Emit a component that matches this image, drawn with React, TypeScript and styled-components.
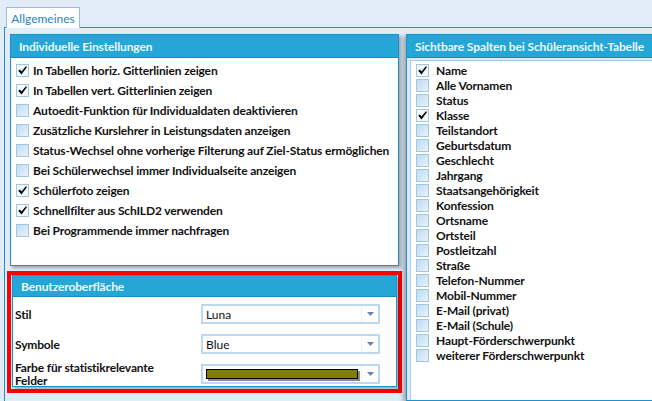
import React from "react";
import styled, { createGlobalStyle } from "styled-components";

const Global = createGlobalStyle`
  html, body { margin: 0; padding: 0; background: #e1ecf8; }
  body { font-family: Lato, "Liberation Sans", sans-serif; }
`;

const Window = styled.div`
  width: 652px;
  height: 401px;
  overflow: hidden;
  background: #e1ecf8;
  display: flex;
  flex-direction: column;
`;

const TabStrip = styled.div`
  height: 27px;
  box-sizing: border-box;
  padding: 7px 0 0 6px;
  display: flex;
  align-items: flex-end;
  position: relative;
  z-index: 1;
`;

const Tab = styled.div`
  height: 21px;
  width: 74px;
  box-sizing: border-box;
  margin-bottom: -1px;
  background: #fff;
  border: 1px solid #8fc0e3;
  border-bottom: none;
  color: #2b7fc4;
  font-size: 12px;
  display: flex;
  align-items: center;
  justify-content: center;
`;

const TabBody = styled.div`
  flex: 1;
  margin-left: 4px;
  border-left: 1px solid #1f90cf;
  border-top: 1px solid #1f90cf;
  padding: 6px 0 0 5px;
  display: flex;
  gap: 7px;
  min-height: 0;
`;

const LeftColumn = styled.div`
  width: 389px;
  flex: none;
  display: flex;
  flex-direction: column;
`;

const RightColumn = styled.div`
  width: 270px;
  flex: none;
  display: flex;
  flex-direction: column;
`;

const Panel = styled.div<{ $height?: number; $shadowLeft?: boolean }>`
  background: #fff;
  border: 1px solid #1b92cc;
  box-shadow: ${(p) =>
    p.$shadowLeft ? "-3px 2px 4px rgba(0, 0, 0, 0.28)" : "2px 2px 3px rgba(0, 0, 0, 0.3)"};
  display: flex;
  flex-direction: column;
  ${(p) => (p.$height ? `height: ${p.$height}px;` : "flex: 1;")}
  box-sizing: border-box;
`;

const PanelHeader = styled.div<{ $h: number }>`
  height: ${(p) => p.$h}px;
  flex: none;
  box-sizing: border-box;
  background: #24a6d6;
  border-bottom: 1px solid #168bc2;
  color: #eef8fd;
  font-size: 12px;
  font-weight: 700;
  letter-spacing: -0.12px;
  display: flex;
  align-items: center;
  padding-left: 8px;
  white-space: nowrap;
`;

const CheckList = styled.div<{ $row: number; $gap: number }>`
  display: flex;
  flex-direction: column;
  padding-top: 2px;
  & > div {
    height: ${(p) => p.$row}px;
    gap: ${(p) => p.$gap}px;
  }
`;

const CheckRow = styled.div`
  display: flex;
  align-items: center;
  padding-left: 5px;
  font-size: 12px;
  font-weight: 700;
  letter-spacing: -0.15px;
  color: #111;
  white-space: nowrap;
`;

const Box = styled.span<{ $checked: boolean }>`
  width: 13px;
  height: 13px;
  flex: none;
  box-sizing: border-box;
  border: 1px solid #a3c6e1;
  background: ${(p) =>
    p.$checked ? "#f3f8fc" : "linear-gradient(135deg, #bfdcf2 0%, #d3e8f7 55%, #e8f3fb 100%)"};
  display: flex;
  align-items: center;
  justify-content: center;
`;

const Check = () => (
  <svg width="11" height="11" viewBox="0 0 11 11">
    <path d="M1.2 5.8 L3 4.6 L4.4 6.6 L9 1.3 L10 2.1 L4.5 9.4 Z" fill="#000" />
  </svg>
);

const Checkbox = ({ label, checked }: { label: string; checked?: boolean }) => (
  <CheckRow>
    <Box $checked={!!checked}>{checked && <Check />}</Box>
    {label}
  </CheckRow>
);

const RedFrame = styled.div`
  margin: 5px -3px 0 -3px;
  height: 122px;
  flex: none;
  box-sizing: border-box;
  border: 4px solid #ff0000;
  padding: 0 1px 2px 1px;
  display: flex;
  flex-direction: column;
`;

const FormBody = styled.div`
  flex: 1;
  display: grid;
  grid-template-columns: 186px 179px;
  grid-auto-rows: 20px;
  row-gap: 10px;
  align-items: center;
  align-content: start;
  padding: 7px 0 0 2px;
`;

const Label = styled.div`
  font-size: 12px;
  font-weight: 700;
  letter-spacing: -0.15px;
  color: #111;
  line-height: 13px;
  width: 160px;
`;

const Combo = styled.div`
  height: 20px;
  box-sizing: border-box;
  border: 2px solid #bdd9ef;
  background: #fff;
  display: flex;
  align-items: stretch;
`;

const ComboValue = styled.div`
  flex: 1;
  display: flex;
  align-items: center;
  padding-left: 3px;
  font-size: 12px;
  color: #111;
  border-right: 1px solid #eef2f6;
`;

const ComboButton = styled.div`
  width: 16px;
  display: flex;
  align-items: center;
  justify-content: center;
`;

const Arrow = () => (
  <svg width="7" height="4" viewBox="0 0 7 4">
    <path d="M0 0 H7 L3.5 4 Z" fill="#6685ad" />
  </svg>
);

const Swatch = styled.div<{ $color: string }>`
  width: 152px;
  height: 10px;
  box-sizing: border-box;
  background: ${(p) => p.$color};
  border: 1px solid #000;
  box-shadow: 2px 2px 0 #8a8a8a;
`;

const RightBody = styled.div`
  flex: 1;
  background: #dce9f5;
  padding: 2px 0 0 3px;
  display: flex;
`;

const ListBox = styled.div`
  flex: 1;
  background: #fff;
  border: 1px solid #a9cce6;
  border-right: none;
  border-bottom: none;
`;

const leftItems: [string, boolean][] = [
  ["In Tabellen horiz. Gitterlinien zeigen", true],
  ["In Tabellen vert. Gitterlinien zeigen", true],
  ["Autoedit-Funktion für Individualdaten deaktivieren", false],
  ["Zusätzliche Kurslehrer in Leistungsdaten anzeigen", false],
  ["Status-Wechsel ohne vorherige Filterung auf Ziel-Status ermöglichen", false],
  ["Bei Schülerwechsel immer Individualseite anzeigen", false],
  ["Schülerfoto zeigen", true],
  ["Schnellfilter aus SchILD2 verwenden", true],
  ["Bei Programmende immer nachfragen", false],
];

const rightItems: [string, boolean][] = [
  ["Name", true],
  ["Alle Vornamen", false],
  ["Status", false],
  ["Klasse", true],
  ["Teilstandort", false],
  ["Geburtsdatum", false],
  ["Geschlecht", false],
  ["Jahrgang", false],
  ["Staatsangehörigkeit", false],
  ["Konfession", false],
  ["Ortsname", false],
  ["Ortsteil", false],
  ["Postleitzahl", false],
  ["Straße", false],
  ["Telefon-Nummer", false],
  ["Mobil-Nummer", false],
  ["E-Mail (privat)", false],
  ["E-Mail (Schule)", false],
  ["Haupt-Förderschwerpunkt", false],
  ["weiterer Förderschwerpunkt", false],
];

export default function App() {
  return (
    <Window>
      <Global />
      <TabStrip>
        <Tab>Allgemeines</Tab>
      </TabStrip>
      <TabBody>
        <LeftColumn>
          <Panel $height={232}>
            <PanelHeader $h={23}>Individuelle Einstellungen</PanelHeader>
            <CheckList $row={20} $gap={4}>
              {leftItems.map(([l, c]) => (
                <Checkbox key={l} label={l} checked={c} />
              ))}
            </CheckList>
          </Panel>
          <RedFrame>
            <Panel>
              <PanelHeader $h={21}>Benutzeroberfläche</PanelHeader>
              <FormBody>
                <Label>Stil</Label>
                <Combo>
                  <ComboValue>Luna</ComboValue>
                  <ComboButton>
                    <Arrow />
                  </ComboButton>
                </Combo>
                <Label>Symbole</Label>
                <Combo>
                  <ComboValue>Blue</ComboValue>
                  <ComboButton>
                    <Arrow />
                  </ComboButton>
                </Combo>
                <Label>Farbe für statistikrelevante Felder</Label>
                <Combo>
                  <ComboValue>
                    <Swatch $color="#808000" />
                  </ComboValue>
                  <ComboButton>
                    <Arrow />
                  </ComboButton>
                </Combo>
              </FormBody>
            </Panel>
          </RedFrame>
        </LeftColumn>
        <RightColumn>
          <Panel $shadowLeft>
            <PanelHeader $h={23}>Sichtbare Spalten bei Schüleransicht-Tabelle</PanelHeader>
            <RightBody>
              <ListBox>
                <CheckList $row={15} $gap={7}>
                  {rightItems.map(([l, c]) => (
                    <Checkbox key={l} label={l} checked={c} />
                  ))}
                </CheckList>
              </ListBox>
            </RightBody>
          </Panel>
        </RightColumn>
      </TabBody>
    </Window>
  );
}
